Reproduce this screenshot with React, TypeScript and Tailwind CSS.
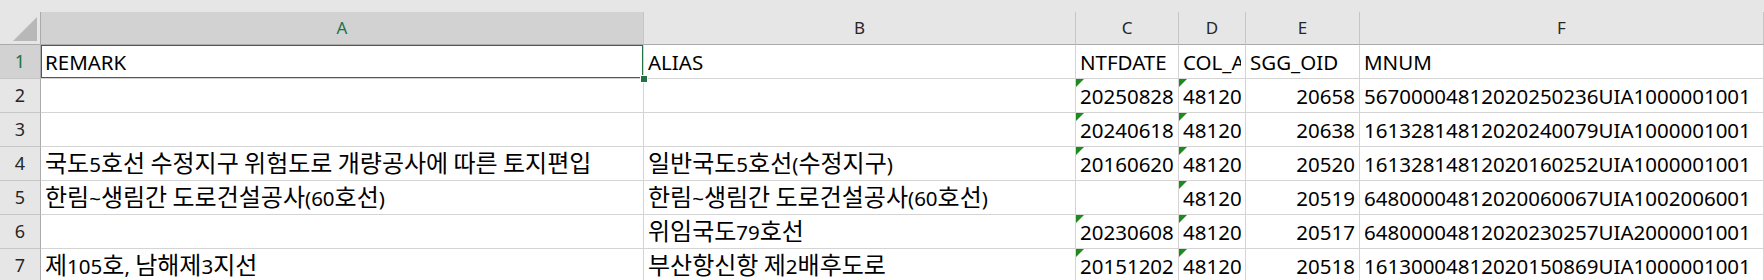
import React from "react";

const GREEN = "#217346";

type Row = {
  n: number;
  a: string;
  b: string;
  c: string;
  d: string;
  e: string;
  f: string;
  ct?: boolean;
  dt?: boolean;
};

const rows: Row[] = [
  { n: 1, a: "REMARK", b: "ALIAS", c: "NTFDATE", d: "COL_ADM", e: "SGG_OID", f: "MNUM" },
  { n: 2, a: "", b: "", c: "20250828", d: "48120", e: "20658", f: "56700004812020250236UIA1000001001", ct: true, dt: true },
  { n: 3, a: "", b: "", c: "20240618", d: "48120", e: "20638", f: "16132814812020240079UIA1000001001", ct: true, dt: true },
  {
    n: 4,
    a: "국도5호선 수정지구 위험도로 개량공사에 따른 토지편입",
    b: "일반국도5호선(수정지구)",
    c: "20160620",
    d: "48120",
    e: "20520",
    f: "16132814812020160252UIA1000001001",
    ct: true,
    dt: true,
  },
  {
    n: 5,
    a: "한림~생림간 도로건설공사(60호선)",
    b: "한림~생림간 도로건설공사(60호선)",
    c: "",
    d: "48120",
    e: "20519",
    f: "64800004812020060067UIA1002006001",
    dt: true,
  },
  { n: 6, a: "", b: "위임국도79호선", c: "20230608", d: "48120", e: "20517", f: "64800004812020230257UIA2000001001", ct: true, dt: true },
  {
    n: 7,
    a: "제105호, 남해제3지선",
    b: "부산항신항 제2배후도로",
    c: "20151202",
    d: "48120",
    e: "20518",
    f: "16130004812020150869UIA1000001001",
    ct: true,
    dt: true,
  },
];

function Mixed({ text }: { text: string }) {
  const parts = text.match(/[\uAC00-\uD7A3]+|[^\uAC00-\uD7A3]+/g) || [];
  return (
    <span className="whitespace-pre">
      {parts.map((p, i) =>
        /[\uAC00-\uD7A3]/.test(p) ? (
          <span key={i} className="text-[24px] [font-family:'Noto_Sans_CJK_KR',sans-serif]">
            {p}
          </span>
        ) : (
          <span key={i}>{p}</span>
        )
      )}
    </span>
  );
}

function Tri() {
  return (
    <span className="absolute left-0 top-0 w-0 h-0 border-t-[8px] border-t-[#1e8a1e] border-r-[8px] border-r-transparent" />
  );
}

function Cell({
  children,
  right,
  tri,
  extra,
}: {
  children?: React.ReactNode;
  right?: boolean;
  tri?: boolean;
  extra?: React.ReactNode;
}) {
  return (
    <div
      className={
        "relative h-[34px] border-r border-b border-[#d4d4d4] bg-white overflow-hidden whitespace-nowrap flex items-end pb-[3px] px-[4px] leading-[26px] " +
        (right ? "justify-end" : "justify-start")
      }
    >
      {tri && <Tri />}
      {children}
      {extra}
    </div>
  );
}

export default function App() {
  const letters = ["A", "B", "C", "D", "E", "F"];
  return (
    <div className="relative w-[1764px] h-[280px] overflow-hidden bg-white text-black text-[20.5px] [font-family:'Noto_Sans','Noto_Sans_CJK_KR',sans-serif]">
      <div className="h-[12px] bg-[#e6e6e6]" />
      <div className="grid grid-cols-[41px_603px_432px_103px_67px_114px_404px]">
        <div className="relative h-[33px] bg-[#e6e6e6] border-r border-b border-[#ababab]">
          <svg className="absolute left-0 top-0" width="41" height="33" viewBox="0 0 41 33">
            <polygon points="37,5 37,29 13,29" fill="#b8b8b8" />
          </svg>
        </div>
        {letters.map((l, i) => (
          <div
            key={l}
            className={
              "h-[33px] flex items-center justify-center border-r border-r-[#c6c6c6] border-b border-b-[#ababab] text-[17px] " +
              (i === 0 ? "bg-[#d2d2d2] text-[#217346]" : "bg-[#e6e6e6] text-[#262626]")
            }
          >
            {l}
          </div>
        ))}

        {rows.map((r) => (
          <React.Fragment key={r.n}>
            <div
              className={
                "h-[34px] flex items-center justify-center border-r border-r-[#ababab] border-b border-b-[#c6c6c6] text-[18px] " +
                (r.n === 1 ? "bg-[#d2d2d2] text-[#217346]" : "bg-[#e6e6e6] text-[#262626]")
              }
            >
              {r.n}
            </div>
            <Cell
              extra={
                r.n === 1 ? (
                  <span
                    className="absolute left-[-1px] top-[-1px] right-[-1px] bottom-[-1px] border-2 pointer-events-none"
                    style={{ borderColor: GREEN }}
                  />
                ) : null
              }
            >
              <Mixed text={r.a} />
            </Cell>
            <Cell>
              <Mixed text={r.b} />
            </Cell>
            <Cell tri={r.ct}>{r.c}</Cell>
            <Cell tri={r.dt}>
              <span className="block w-[59px] overflow-hidden">{r.d}</span>
            </Cell>
            <Cell right={r.n !== 1}>{r.e}</Cell>
            <Cell>{r.f}</Cell>
          </React.Fragment>
        ))}
      </div>
      <div className="absolute left-[640px] top-[75px] w-[8px] h-[8px] bg-[#217346] border border-white" />
    </div>
  );
}
